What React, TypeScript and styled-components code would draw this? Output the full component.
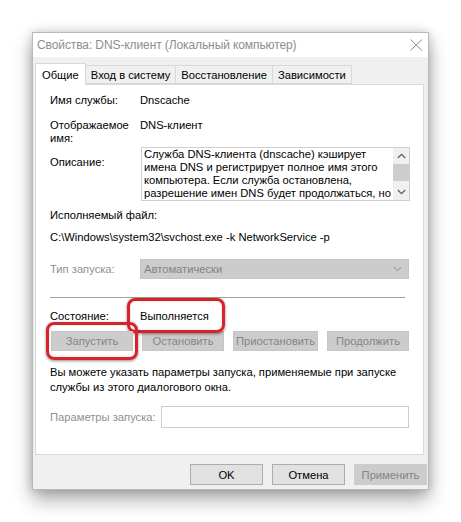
import React from "react";
import styled, { createGlobalStyle } from "styled-components";

const GlobalStyle = createGlobalStyle`
  html, body {
    margin: 0;
    padding: 0;
    background: #ffffff;
  }
  body {
    font-family: "Liberation Sans", Arial, sans-serif;
    font-size: 11.2px;
    color: #000000;
  }
`;

const Page = styled.div`
  padding: 32px 0 40px 32px;
`;

const Dialog = styled.div`
  width: 397px;
  height: 458px;
  background: #f0f0f0;
  border: 1px solid #b9b9b9;
  box-sizing: border-box;
  box-shadow: 0 10px 18px rgba(0, 0, 0, 0.32), 0 0 10px rgba(0, 0, 0, 0.18);
  display: flex;
  flex-direction: column;
`;

const TitleBar = styled.div`
  height: 24px;
  background: #ffffff;
  display: flex;
  align-items: center;
  justify-content: space-between;
  padding: 0 5px 0 4px;
`;

const TitleText = styled.span`
  color: #8e8e8e;
  font-size: 12px;
  letter-spacing: -0.1px;
`;

const Body = styled.div`
  padding: 6px 4px 0 2px;
  display: flex;
  flex-direction: column;
`;

const TabRow = styled.div`
  display: flex;
  align-items: flex-end;
  height: 21px;
  padding-left: 1px;
`;

const Tab = styled.div<{ $active?: boolean }>`
  height: ${(p) => (p.$active ? "22px" : "19px")};
  padding: 0 ${(p) => (p.$active ? "6px" : "5px")};
  margin-bottom: ${(p) => (p.$active ? "-1px" : "0")};
  background: ${(p) => (p.$active ? "#ffffff" : "#f0f0f0")};
  border: 1px solid #d9d9d9;
  border-bottom: ${(p) => (p.$active ? "none" : "1px solid #d9d9d9")};
  margin-left: -1px;
  box-sizing: border-box;
  display: flex;
  align-items: center;
  white-space: nowrap;
  position: relative;
  z-index: ${(p) => (p.$active ? 2 : 1)};
`;

const Panel = styled.div`
  height: 371px;
  background: #ffffff;
  border: 1px solid #d9d9d9;
  box-sizing: border-box;
  padding: 9px 17px 0 14px;
  display: flex;
  flex-direction: column;
`;

const FieldRow = styled.div<{ $mt?: number }>`
  display: grid;
  grid-template-columns: 90px 1fr;
  align-items: start;
  margin-top: ${(p) => p.$mt ?? 0}px;
`;

const Label = styled.div<{ $disabled?: boolean; $mt?: number }>`
  color: ${(p) => (p.$disabled ? "#8f8f8f" : "#000000")};
  line-height: 13px;
  white-space: nowrap;
  margin-top: ${(p) => p.$mt ?? 0}px;
`;

const Value = styled.div`
  line-height: 13px;
`;

const DescBox = styled.div`
  margin-left: 1px;
  height: 54px;
  border: 1px solid #cfcfcf;
  box-sizing: border-box;
  display: flex;
`;

const DescText = styled.div`
  flex: 1;
  padding: 0 2px;
  line-height: 13px;
  white-space: nowrap;
  overflow: hidden;
`;

const ScrollBar = styled.div`
  width: 16px;
  background: #f0f0f0;
  display: flex;
  flex-direction: column;
  align-items: center;
`;

const ScrollArrow = styled.div`
  height: 16px;
  display: flex;
  align-items: center;
  justify-content: center;
`;

const ScrollThumb = styled.div`
  width: 16px;
  height: 17px;
  background: #cdcdcd;
`;

const ScrollTrack = styled.div`
  flex: 1;
`;

const Plain = styled.div<{ $mt?: number }>`
  margin-top: ${(p) => p.$mt ?? 0}px;
  line-height: 13px;
  white-space: nowrap;
`;

const SelectBox = styled.div`
  height: 20px;
  background: #cccccc;
  border: 1px solid #c4c4c4;
  box-sizing: border-box;
  display: flex;
  align-items: center;
  justify-content: space-between;
  padding: 0 6px 0 3px;
  color: #848484;
`;

const SelectRow = styled.div`
  display: grid;
  grid-template-columns: 90px 1fr;
  align-items: center;
  margin-top: 15px;
  margin-right: -3px;
`;

const Separator = styled.div`
  height: 1px;
  background: #a0a0a0;
  margin: 18px 1px 0 0;
`;

const Highlight = styled.div<{ $t: number; $r: number; $b: number; $l: number }>`
  position: relative;
  display: inline-block;
  &::after {
    content: "";
    position: absolute;
    top: ${(p) => p.$t}px;
    right: ${(p) => p.$r}px;
    bottom: ${(p) => p.$b}px;
    left: ${(p) => p.$l}px;
    border: 3px solid #d8232c;
    border-radius: 8px;
    box-shadow: 0 1px 3px rgba(0, 0, 0, 0.45), inset 0 0 2px rgba(0, 0, 0, 0.2);
    pointer-events: none;
  }
`;

const StatusRow = styled.div`
  display: grid;
  grid-template-columns: 90px 1fr;
  margin-top: 12px;
  line-height: 13px;
`;

const ButtonRow = styled.div`
  display: flex;
  justify-content: space-between;
  margin: 8px -3px 0 1px;
`;

const DisabledButton = styled.div<{ $w?: number }>`
  width: ${(p) => p.$w ?? 82}px;
  height: 20px;
  background: #cccccc;
  border: 1px solid #c6c6c6;
  box-sizing: border-box;
  color: #858585;
  display: flex;
  align-items: center;
  justify-content: center;
`;

const InfoText = styled.div`
  margin-top: 14px;
  line-height: 14.5px;
  white-space: nowrap;
`;

const ParamsRow = styled.div`
  display: grid;
  grid-template-columns: 111px 1fr;
  align-items: center;
  margin: 12px -3px 0 0;
`;

const TextInput = styled.div`
  height: 22px;
  border: 1px solid #cccccc;
  box-sizing: border-box;
  background: #ffffff;
`;

const Footer = styled.div`
  display: flex;
  justify-content: flex-end;
  gap: 9px;
  padding-top: 9px;
  margin-right: -3px;
`;

const DialogButton = styled.div<{ $disabled?: boolean }>`
  width: 73px;
  height: 21px;
  box-sizing: border-box;
  background: ${(p) => (p.$disabled ? "#cccccc" : "#e1e1e1")};
  border: 1px solid ${(p) => (p.$disabled ? "#cccccc" : "#adadad")};
  color: ${(p) => (p.$disabled ? "#858585" : "#000000")};
  display: flex;
  align-items: center;
  justify-content: center;
`;

const CloseIcon = () => (
  <svg width="13" height="12" viewBox="0 0 13 12">
    <path d="M0.5 0.5 L12 11.5 M12 0.5 L0.5 11.5" stroke="#8a8a8a" strokeWidth="1" fill="none" />
  </svg>
);

const Chevron = ({ up, color = "#606060" }: { up?: boolean; color?: string }) => (
  <svg width="9" height="6" viewBox="0 0 9 6">
    <path
      d={up ? "M0.8 5 L4.5 1.3 L8.2 5" : "M0.8 1 L4.5 4.7 L8.2 1"}
      stroke={color}
      strokeWidth="1.3"
      fill="none"
    />
  </svg>
);

const tabs = ["Общие", "Вход в систему", "Восстановление", "Зависимости"];

const description = [
  "Служба DNS-клиента (dnscache) кэширует",
  "имена DNS и регистрирует полное имя этого",
  "компьютера. Если служба остановлена,",
  "разрешение имен DNS будет продолжаться, но",
];

const App: React.FC = () => {
  return (
    <>
      <GlobalStyle />
      <Page>
        <Dialog>
          <TitleBar>
            <TitleText>Свойства: DNS-клиент (Локальный компьютер)</TitleText>
            <CloseIcon />
          </TitleBar>
          <Body>
            <TabRow>
              {tabs.map((t, i) => (
                <Tab key={t} $active={i === 0}>
                  {t}
                </Tab>
              ))}
            </TabRow>
            <Panel>
              <FieldRow>
                <Label>Имя службы:</Label>
                <Value>Dnscache</Value>
              </FieldRow>
              <FieldRow $mt={12}>
                <Label>
                  Отображаемое
                  <br />
                  имя:
                </Label>
                <Value>DNS-клиент</Value>
              </FieldRow>
              <FieldRow $mt={2}>
                <Label $mt={9}>Описание:</Label>
                <DescBox>
                  <DescText>
                    {description.map((line) => (
                      <div key={line}>{line}</div>
                    ))}
                  </DescText>
                  <ScrollBar>
                    <ScrollArrow>
                      <Chevron up />
                    </ScrollArrow>
                    <ScrollThumb />
                    <ScrollTrack />
                    <ScrollArrow>
                      <Chevron />
                    </ScrollArrow>
                  </ScrollBar>
                </DescBox>
              </FieldRow>
              <Plain $mt={8}>Исполняемый файл:</Plain>
              <Plain $mt={9}>C:\Windows\system32\svchost.exe -k NetworkService -p</Plain>
              <SelectRow>
                <Label $disabled>Тип запуска:</Label>
                <SelectBox>
                  <span>Автоматически</span>
                  <Chevron color="#a8a8a8" />
                </SelectBox>
              </SelectRow>
              <Separator />
              <StatusRow>
                <span>Состояние:</span>
                <span>
                  <Highlight $t={-12} $r={-16} $b={-10} $l={-13}>
                    Выполняется
                  </Highlight>
                </span>
              </StatusRow>
              <ButtonRow>
                <Highlight $t={-9} $r={-5} $b={-9} $l={-5}>
                  <DisabledButton>Запустить</DisabledButton>
                </Highlight>
                <DisabledButton>Остановить</DisabledButton>
                <DisabledButton $w={85}>Приостановить</DisabledButton>
                <DisabledButton>Продолжить</DisabledButton>
              </ButtonRow>
              <InfoText>
                Вы можете указать параметры запуска, применяемые при запуске
                <br />
                службы из этого диалогового окна.
              </InfoText>
              <ParamsRow>
                <Label $disabled>Параметры запуска:</Label>
                <TextInput />
              </ParamsRow>
            </Panel>
            <Footer>
              <DialogButton>OK</DialogButton>
              <DialogButton>Отмена</DialogButton>
              <DialogButton $disabled>Применить</DialogButton>
            </Footer>
          </Body>
        </Dialog>
      </Page>
    </>
  );
};

export default App;
